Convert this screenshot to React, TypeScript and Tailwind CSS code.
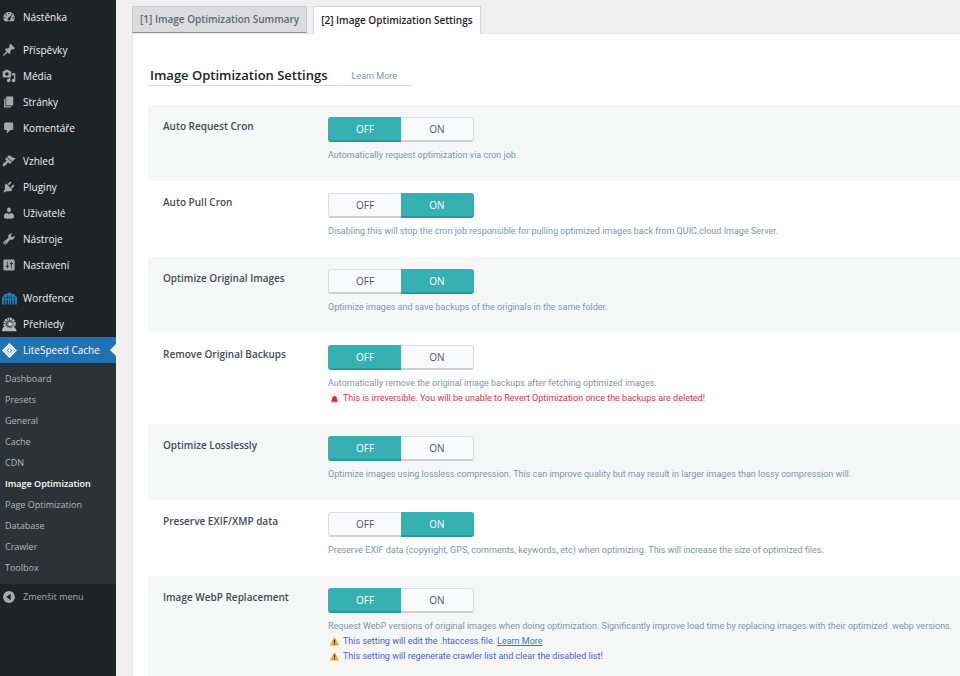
import React, { useState } from 'react';

type IconProps = { d: string };

const Dashicon = ({ d }: IconProps) => (
  <svg viewBox="0 0 20 20" className="size-[14px] shrink-0 fill-[#a7aaad]" aria-hidden="true">
    <path fillRule="evenodd" d={d} />
  </svg>
);

const ICONS = {
  dashboard:
    'M3.76 16h12.48c1.1-1.37 1.76-3.11 1.76-5 0-4.42-3.58-8-8-8s-8 3.58-8 8c0 1.89.66 3.63 1.76 5zM10 4c.55 0 1 .45 1 1s-.45 1-1 1-1-.45-1-1 .45-1 1-1zM6 6c.55 0 1 .45 1 1s-.45 1-1 1-1-.45-1-1 .45-1 1-1zm8 0c.55 0 1 .45 1 1s-.45 1-1 1-1-.45-1-1 .45-1 1-1zm-5.37 5.55L14 7.5l-2.1 6.1c-.3 1-1 1.4-1.9 1.4-1.1 0-2-.9-2-2 0-.57.24-1.08.63-1.45zM4 10c.55 0 1 .45 1 1s-.45 1-1 1-1-.45-1-1 .45-1 1-1zm12 0c.55 0 1 .45 1 1s-.45 1-1 1-1-.45-1-1 .45-1 1-1z',
  post: 'M10.44 3.02l1.82-1.82 6.36 6.35-1.83 1.82c-1.05-.68-2.48-.57-3.41.36l-.75.75c-.92.93-1.04 2.35-.35 3.41l-1.83 1.82-2.41-2.41-2.8 2.79c-.42.42-3.38 2.71-3.8 2.29s1.86-3.39 2.28-3.81l2.79-2.79L4.1 9.36l1.83-1.82c1.05.69 2.48.57 3.4-.36l.75-.75c.93-.92 1.05-2.35.36-3.41z',
  media:
    'M13 11V4c0-.55-.45-1-1-1h-1.67L9 1H5L3.67 3H2c-.55 0-1 .45-1 1v7c0 .55.45 1 1 1h10c.55 0 1-.45 1-1zM7 4.5c1.38 0 2.5 1.12 2.5 2.5S8.38 9.5 7 9.5 4.5 8.38 4.5 7 5.62 4.5 7 4.5zM14 6h5v10.5c0 1.38-1.12 2.5-2.5 2.5S14 17.88 14 16.5s1.12-2.5 2.5-2.5c.17 0 .34.02.5.05V9h-3V6zm-4 8.05V13h2v3.5c0 1.38-1.12 2.5-2.5 2.5S7 17.88 7 16.5 8.12 14 9.5 14c.17 0 .34.02.5.05z',
  page: 'M6 15V2h10v13H6zm-1 1h8v2H3V5h2v11z',
  comments: 'M5 2h9c1.1 0 2 .9 2 2v7c0 1.1-.9 2-2 2h-2l-5 5v-5H5c-1.1 0-2-.9-2-2V4c0-1.1.9-2 2-2z',
  appearance:
    'M14.48 11.06L7.41 3.99l1.5-1.5c.5-.56 2.3-.47 3.51.32 1.21.8 1.43 1.28 2.91 2.1 1.18.64 2.45 1.26 4.45.85zm-.71.71L6.7 4.7 4.93 6.47c-.39.39-.39 1.02 0 1.41l1.06 1.06c.39.39.39 1.03 0 1.42-.6.6-1.43 1.11-2.21 1.69-.35.26-.7.53-1.01.84C1.43 14.23.4 16.08 1.4 17.07c.99 1 2.84-.03 4.18-1.36.31-.31.58-.66.85-1.02.57-.78 1.08-1.61 1.69-2.21.39-.39 1.02-.39 1.41 0l1.06 1.06c.39.39 1.02.39 1.41 0z',
  plugins:
    'M13.11 4.36L9.87 7.6 8 5.73l3.24-3.24c.35-.34 1.05-.2 1.56.32.52.51.66 1.21.31 1.55zm-8 1.77l.91-1.12 9.01 9.01-1.19.84c-.71.71-2.63 1.16-3.82 1.16H6.14L4.9 17.26c-.59.59-1.54.59-2.12 0-.59-.58-.59-1.53 0-2.12l1.24-1.24v-3.88c0-1.13.4-3.19 1.09-3.89zm7.26 3.97l3.24-3.24c.34-.35 1.04-.21 1.55.31.52.51.66 1.21.31 1.55l-3.24 3.25z',
  users:
    'M10 9.25c-2.27 0-2.73-3.44-2.73-3.44C7 4.02 7.82 2 9.97 2c2.16 0 2.98 2.02 2.71 3.81 0 0-.41 3.44-2.68 3.44zm0 2.57L12.72 10c2.39 0 4.52 2.33 4.52 4.53v2.49s-3.65 1.13-7.24 1.13c-3.65 0-7.24-1.13-7.24-1.13v-2.49c0-2.25 1.94-4.48 4.47-4.48z',
  tools:
    'M16.68 9.77c-1.34 1.34-3.3 1.67-4.95.99l-5.41 6.52c-.99.99-2.59.99-3.58 0s-.99-2.59 0-3.57l6.52-5.42c-.68-1.65-.35-3.61.99-4.95 1.28-1.28 3.12-1.62 4.72-1.06l-2.89 2.89 2.82 2.82 2.86-2.87c.53 1.58.18 3.39-1.08 4.65zM3.81 16.21c.4.39 1.04.39 1.43 0 .4-.4.4-1.04 0-1.43-.39-.4-1.03-.4-1.43 0-.39.39-.39 1.03 0 1.43z',
  settings:
    'M18 16V4c0-1.1-.9-2-2-2H4c-1.1 0-2 .9-2 2v12c0 1.1.9 2 2 2h12c1.1 0 2-.9 2-2zM8 11h1c.55 0 1 .45 1 1s-.45 1-1 1H8v1.5c0 .28-.22.5-.5.5s-.5-.22-.5-.5V13H6c-.55 0-1-.45-1-1s.45-1 1-1h1V5.5c0-.28.22-.5.5-.5s.5.22.5.5V11zm5-2h-1c-.55 0-1-.45-1-1s.45-1 1-1h1V5.5c0-.28.22-.5.5-.5s.5.22.5.5V7h1c.55 0 1 .45 1 1s-.45 1-1 1h-1v5.5c0 .28-.22.5-.5.5s-.5-.22-.5-.5V9z',
  collapse: 'M10 1.5a8.5 8.5 0 1 1 0 17 8.5 8.5 0 0 1 0-17zM12.5 5.5L6 10l6.5 4.5z',
};

const WordfenceIcon = () => (
  <svg viewBox="0 0 20 20" className="size-[15px] shrink-0" aria-hidden="true">
    <path fill="#1f7fb5" d="M0 8c2-.8 3-2 3-4 2.600 0 5-.8 7-2.500C12 3.200 14.400 4 17 4c0 2 1 3.200 3 4v2H0z" />
    <path
      fill="#1f7fb5"
      d="M0 9h3v9H0zM4 7.500L5.300 6l1.200 1.500V18H4zM7.700 6.500L10 4l2.300 2.500V18H7.700zM13.500 7.500L14.700 6 16 7.500V18h-2.500zM17 9h3v9h-3z"
    />
    <path stroke="#1d2327" strokeWidth="1" fill="none" d="M3.500 8v10M7.100 6v12M12.900 6v12M16.500 8v10M10 7v11" />
    <path stroke="#1f7fb5" strokeWidth="1.500" d="M0 11.500h20" />
  </svg>
);

const ReportsIcon = () => (
  <svg viewBox="0 0 20 20" className="size-[15px] shrink-0" aria-hidden="true">
    <circle cx="10" cy="9" r="6.500" fill="none" stroke="#b4b7b9" strokeWidth="3.500" strokeDasharray="2.600 .8" />
    <circle cx="10" cy="9" r="5.500" fill="#8c8f94" />
    <path fill="none" stroke="#2c3338" strokeWidth="1.300" d="M13.500 7A4 4 0 1 0 13 12" />
    <circle cx="11" cy="9.500" r="1.800" fill="#d5d7da" />
    <path fill="#b4b7b9" d="M0 19c0-3 1.500-6 4-7 2 3 8 4 11.500 1.500 2.500 1 4 3 4 5.500z" />
  </svg>
);

const LiteSpeedIcon = () => (
  <svg viewBox="0 0 20 20" className="size-[15px] shrink-0" aria-hidden="true">
    <path fill="#fff" d="M10 0l10 10-10 10L0 10z" />
    <path fill="none" stroke="#8fbae0" strokeWidth="1" d="M10 3.500l6.500 6.500-6.500 6.500L3.500 10z" />
    <path fill="#5c9bd1" d="M10 6l4 4-4 4-4-4z" />
    <path fill="#fff" d="M10.800 6L7.800 10.500h1.500L9.200 14 12.200 9.500h-1.500z" />
  </svg>
);

const SirenIcon = () => (
  <svg viewBox="0 0 20 20" className="mx-[2px] size-[9px] shrink-0" aria-hidden="true">
    <path stroke="#f5b942" strokeWidth="2" d="M10 0v3M3 2l2 2.500M17 2l-2 2.500" />
    <path fill="#e8222e" d="M4 15l1.500-8Q6 5 8 5h4q2 0 2.500 2L16 15z" />
    <path fill="#b9c2ca" d="M2 15h16v4H2z" />
    <path fill="#e8222e" d="M4 13h12v4H4z" />
  </svg>
);

const WarningIcon = () => (
  <svg viewBox="0 0 20 20" className="mx-[2px] size-[9px] shrink-0" aria-hidden="true">
    <path fill="#f9a825" d="M10 1q1 0 1.500 1L19.500 17q.5 2-1.500 2H2q-2 0-1.500-2L8.500 2Q9 1 10 1z" />
    <path fill="#2b2b2b" d="M8.500 6h3l-.5 7H9zM8.700 14.500h2.600v2.500H8.700z" />
  </svg>
);

const MENU_GROUPS = [
  [{ label: 'Nástěnka', icon: <Dashicon d={ICONS.dashboard} /> }],
  [
    { label: 'Příspěvky', icon: <Dashicon d={ICONS.post} /> },
    { label: 'Média', icon: <Dashicon d={ICONS.media} /> },
    { label: 'Stránky', icon: <Dashicon d={ICONS.page} /> },
    { label: 'Komentáře', icon: <Dashicon d={ICONS.comments} /> },
  ],
  [
    { label: 'Vzhled', icon: <Dashicon d={ICONS.appearance} /> },
    { label: 'Pluginy', icon: <Dashicon d={ICONS.plugins} /> },
    { label: 'Uživatelé', icon: <Dashicon d={ICONS.users} /> },
    { label: 'Nástroje', icon: <Dashicon d={ICONS.tools} /> },
    { label: 'Nastavení', icon: <Dashicon d={ICONS.settings} /> },
  ],
  [
    { label: 'Wordfence', icon: <WordfenceIcon /> },
    { label: 'Přehledy', icon: <ReportsIcon /> },
    { label: 'LiteSpeed Cache', icon: <LiteSpeedIcon />, current: true },
  ],
];

const SUBMENU = [
  'Dashboard',
  'Presets',
  'General',
  'Cache',
  'CDN',
  'Image Optimization',
  'Page Optimization',
  'Database',
  'Crawler',
  'Toolbox',
];

type Setting = {
  id: string;
  title: string;
  on: boolean;
  desc: string;
  danger?: string;
  notes?: { text: string; link?: string }[];
};

const SETTINGS: Setting[] = [
  {
    id: 'auto_request',
    title: 'Auto Request Cron',
    on: false,
    desc: 'Automatically request optimization via cron job.',
  },
  {
    id: 'auto_pull',
    title: 'Auto Pull Cron',
    on: true,
    desc: 'Disabling this will stop the cron job responsible for pulling optimized images back from QUIC.cloud Image Server.',
  },
  {
    id: 'optimize_orig',
    title: 'Optimize Original Images',
    on: true,
    desc: 'Optimize images and save backups of the originals in the same folder.',
  },
  {
    id: 'rm_backup',
    title: 'Remove Original Backups',
    on: false,
    desc: 'Automatically remove the original image backups after fetching optimized images.',
    danger: 'This is irreversible. You will be unable to Revert Optimization once the backups are deleted!',
  },
  {
    id: 'lossless',
    title: 'Optimize Losslessly',
    on: false,
    desc: 'Optimize images using lossless compression. This can improve quality but may result in larger images than lossy compression will.',
  },
  {
    id: 'exif',
    title: 'Preserve EXIF/XMP data',
    on: true,
    desc: 'Preserve EXIF data (copyright, GPS, comments, keywords, etc) when optimizing. This will increase the size of optimized files.',
  },
  {
    id: 'webp',
    title: 'Image WebP Replacement',
    on: false,
    desc: 'Request WebP versions of original images when doing optimization. Significantly improve load time by replacing images with their optimized .webp versions.',
    notes: [
      { text: 'This setting will edit the .htaccess file.', link: 'Learn More' },
      { text: 'This setting will regenerate crawler list and clear the disabled list!' },
    ],
  },
];

function Sidebar() {
  return (
    <nav className="w-[116px] shrink-0 bg-[#1d2327] pt-1 text-[10px] text-[#f0f0f1]">
      <div className="flex flex-col gap-[7px]">
        {MENU_GROUPS.map((group, i) => (
          <ul key={i}>
            {group.map((item) => (
              <li key={item.label}>
                <a
                  href="#"
                  className={
                    'current' in item
                      ? 'relative flex h-[26px] items-center bg-[#2271b1] pl-[2px] text-white'
                      : 'flex h-[26px] items-center pl-[2px] hover:text-[#72aee6]'
                  }
                >
                  <span className="flex w-[21px] shrink-0">{item.icon}</span>
                  {item.label}
                  {'current' in item && (
                    <span className="absolute top-1/2 right-0 -translate-y-1/2 border-y-6 border-r-6 border-y-transparent border-r-[#f0f0f1]" />
                  )}
                </a>
              </li>
            ))}
          </ul>
        ))}
      </div>
      <ul className="bg-[#2c3338] pt-[5px] pb-[6px] text-[9px]">
        {SUBMENU.map((label) => (
          <li key={label}>
            <a
              href="#"
              className={
                label === 'Image Optimization'
                  ? 'flex h-[21px] items-center pl-[5px] font-semibold text-white'
                  : 'flex h-[21px] items-center pl-[5px] text-[#b4b7b9] hover:text-[#72aee6]'
              }
            >
              {label}
            </a>
          </li>
        ))}
      </ul>
      <button type="button" className="flex h-[26px] w-full items-center gap-[7px] pl-[2px] text-[9px] text-[#a7aaad]">
        <Dashicon d={ICONS.collapse} />
        Zmenšit menu
      </button>
    </nav>
  );
}

function Toggle({ id, title, value, onChange }: { id: string; title: string; value: boolean; onChange: (v: boolean) => void }) {
  return (
    <div role="radiogroup" aria-label={title} className="relative flex h-[25px] w-[146px] text-[10px]">
      {[false, true].map((option) => (
        <label
          key={String(option)}
          className="flex flex-1 cursor-pointer items-center justify-center border border-b-2 border-[#dcdee0] border-b-[#cfd1d4] bg-[#f9fafc] text-[#50575e] first:rounded-l-[3px] first:border-r-0 last:rounded-r-[3px] last:border-l-0 has-checked:border-[#36b0b0] has-checked:border-b-[#259b9b] has-checked:bg-[#36b0b0] has-checked:text-white"
        >
          <input
            type="radio"
            name={id}
            className="sr-only"
            checked={value === option}
            onChange={() => onChange(option)}
          />
          {option ? 'ON' : 'OFF'}
        </label>
      ))}
    </div>
  );
}

function SettingRow({ setting }: { setting: Setting }) {
  const [value, setValue] = useState(setting.on);

  return (
    <div className="flex pt-3 pb-[18px] pl-[15px] odd:bg-[#f5f7f7]">
      <h3 className="w-[165px] shrink-0 pt-[2px] text-[10px] leading-[15px] font-semibold text-[#444b52]">{setting.title}</h3>
      <div className="min-w-0 flex-1">
        <Toggle id={setting.id} title={setting.title} value={value} onChange={setValue} />
        <div className="pt-[6px] font-['Roboto',sans-serif] text-[9px] leading-[15px] text-[#8295a5]">
          <p>{setting.desc}</p>
          {setting.danger && (
            <p className="flex items-center gap-[2px] text-[#dc3545]">
              <SirenIcon />
              {setting.danger}
            </p>
          )}
          {setting.notes?.map((note) => (
            <p key={note.text} className="flex items-center gap-[2px] text-[#4a62cc]">
              <WarningIcon />
              {note.text}
              {note.link && (
                <a href="#" className="text-[#3a78a8] underline">
                  {note.link}
                </a>
              )}
            </p>
          ))}
        </div>
      </div>
    </div>
  );
}

export default function App() {
  return (
    <div className="flex min-h-screen bg-[#f0f0f1] font-['Open_Sans',sans-serif]">
      <Sidebar />
      <main className="flex min-w-0 flex-1 flex-col pt-[6px] pl-4">
        <div className="flex gap-[6px] text-[10px] font-semibold">
          <a
            href="#summary"
            className="flex h-[27px] items-center border border-[#c8cacd] border-b-[#8c8f94] bg-[#dcdcde] px-[7px] text-[#606970]"
          >
            [1] Image Optimization Summary
          </a>
          <a
            href="#settings"
            className="z-1 -mb-px flex h-[28px] items-center border border-b-0 border-[#d4d6d9] bg-white px-[7px] pb-px text-[#1d2327]"
          >
            [2] Image Optimization Settings
          </a>
        </div>
        <div className="flex-1 border-t border-l border-[#e5e6e8] bg-white pt-8 pl-[15px]">
          <div className="flex h-5 w-[264px] items-center border-b border-[#dcdee0] pl-[2px]">
            <h2 className="text-[13px] font-semibold text-[#1d2327]">Image Optimization Settings</h2>
            <a href="#learn" className="pt-[2px] pl-[24px] font-['Roboto',sans-serif] text-[9px] text-[#8295a5]">
              Learn More
            </a>
          </div>
          <div className="pt-[19px]">
            {SETTINGS.map((setting) => (
              <SettingRow key={setting.id} setting={setting} />
            ))}
          </div>
        </div>
      </main>
    </div>
  );
}
